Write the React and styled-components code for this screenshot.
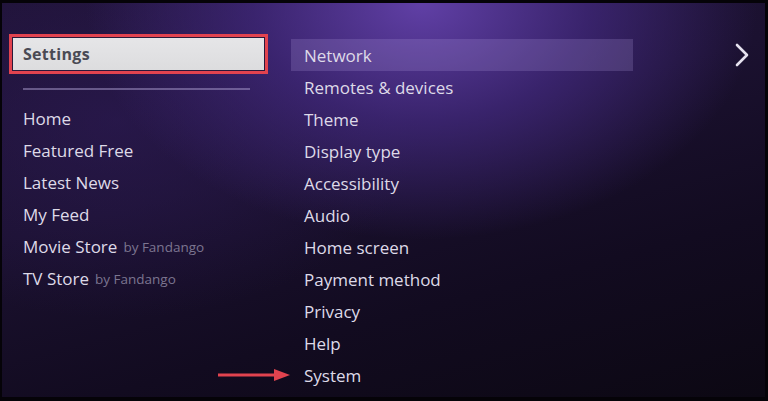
import React from 'react';
import styled, { createGlobalStyle } from 'styled-components';

const GlobalStyle = createGlobalStyle`
  html, body {
    margin: 0;
    padding: 0;
    background: #000;
  }
  body {
    font-family: "Open Sans", "Liberation Sans", sans-serif;
  }
`;

const Frame = styled.div`
  width: 768px;
  height: 401px;
  box-sizing: border-box;
  border-style: solid;
  border-color: #050308;
  border-width: 3px 3px 4px 2px;
  background: #000;
`;

const Screen = styled.div`
  height: 100%;
  box-sizing: border-box;
  display: flex;
  padding: 31px 0 0 7px;
  background:
    radial-gradient(ellipse 55% 75% at 55% 0%, rgba(100, 66, 172, 0.95) 0%, rgba(68, 42, 130, 0.72) 40%, rgba(40, 24, 80, 0) 80%),
    radial-gradient(ellipse 40% 50% at 15% 30%, rgba(48, 28, 92, 0.55) 0%, rgba(48, 28, 92, 0) 100%),
    linear-gradient(165deg, #1f1336 0%, #1b1130 40%, #120b20 70%, #0c0813 100%);
`;

const LeftPane = styled.nav`
  width: 259px;
  flex-shrink: 0;
`;

const SettingsBox = styled.div`
  height: 40px;
  box-sizing: border-box;
  border: 3px solid #e2434f;
  box-shadow: inset 0 0 0 1px #2a1a3a;
  background: linear-gradient(180deg, #e6e6e8 0%, #dcdcde 100%);
  display: flex;
  align-items: center;
  padding-left: 11px;
  font-size: 16px;
  font-weight: 700;
  color: #4a4a54;
  letter-spacing: 0.3px;
`;

const Divider = styled.div`
  margin: 14px 0 12px 14px;
  width: 227px;
  height: 2px;
  background: rgba(170, 156, 205, 0.5);
`;

const Row = styled.div`
  position: relative;
  height: 32px;
  display: flex;
  align-items: center;
  gap: 6px;
  padding-left: ${p => p.$indent}px;
  font-size: 17px;
  color: #dedae8;
  white-space: nowrap;
  background: ${p => (p.$active ? 'rgba(190, 170, 235, 0.2)' : 'transparent')};
`;

const Sub = styled.span`
  font-size: 13.5px;
  color: #7c7590;
  margin-top: 2px;
`;

const RightPane = styled.div`
  width: 342px;
  margin: 5px 0 0 23px;
`;

const Chevron = styled.div`
  margin: 9px 16px 0 auto;
  width: 14px;
  height: 24px;
`;

const Arrow = styled.svg`
  position: absolute;
  left: -73px;
  top: 10px;
`;

const leftItems = [
  ['Home'],
  ['Featured Free'],
  ['Latest News'],
  ['My Feed'],
  ['Movie Store', 'by Fandango'],
  ['TV Store', 'by Fandango'],
];

const rightItems = [
  'Network',
  'Remotes & devices',
  'Theme',
  'Display type',
  'Accessibility',
  'Audio',
  'Home screen',
  'Payment method',
  'Privacy',
  'Help',
  'System',
];

const App = () => {
  return (
    <>
      <GlobalStyle />
      <Frame>
        <Screen>
          <LeftPane>
            <SettingsBox>Settings</SettingsBox>
            <Divider />
            {leftItems.map(([label, sub]) => (
              <Row key={label} $indent={14}>
                {label}
                {sub && <Sub>{sub}</Sub>}
              </Row>
            ))}
          </LeftPane>
          <RightPane>
            {rightItems.map((label, i) => (
              <Row key={label} $indent={13} $active={i === 0}>
                {label === 'System' && (
                  <Arrow width="72" height="12" viewBox="0 0 72 12">
                    <line x1="0" y1="6" x2="60" y2="6" stroke="#e2434f" strokeWidth="3" strokeLinecap="round" />
                    <polygon points="56,0 72,6 56,12" fill="#e2434f" />
                  </Arrow>
                )}
                {label}
              </Row>
            ))}
          </RightPane>
          <Chevron>
            <svg width="14" height="24" viewBox="0 0 14 24">
              <polyline points="2,2 12,12 2,22" fill="none" stroke="#e6e2ef" strokeWidth="2.6" strokeLinecap="round" strokeLinejoin="round" />
            </svg>
          </Chevron>
        </Screen>
      </Frame>
    </>
  );
};

export default App;
